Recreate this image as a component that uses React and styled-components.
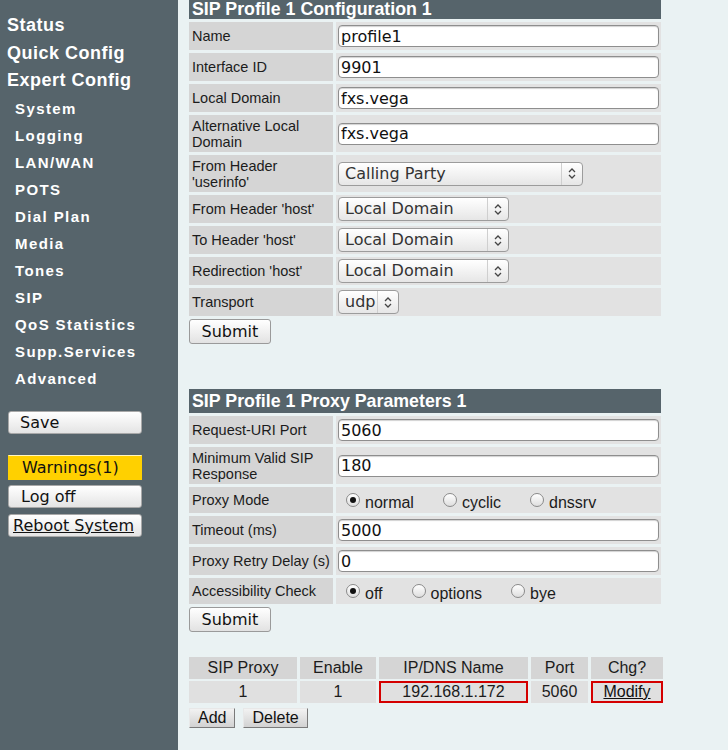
import React from 'react';
import styled, { createGlobalStyle } from 'styled-components';

const GlobalStyle = createGlobalStyle`
    html, body {
        margin: 0;
        padding: 0;
    }
    body {
        background: #eaf2f3;
        font-family: "Liberation Sans", Arial, sans-serif;
    }
`

const Page = styled.div`
    display: flex;
    min-height: 750px;
    overflow: hidden;
`

const Sidebar = styled.nav`
    width: 178px;
    flex-shrink: 0;
    background: #56646b;
    padding-top: 12px;
    box-sizing: border-box;
`

const NavLink = styled.a`
    display: block;
    color: #fff;
    text-decoration: none;
    font-weight: bold;
    white-space: nowrap;
    font-size: ${p => p.$sub ? '15px' : '18px'};
    line-height: ${p => p.$sub ? '27.1px' : '27.5px'};
    letter-spacing: ${p => p.$sub ? '1.4px' : '0.5px'};
    padding-left: ${p => p.$sub ? '15px' : '7px'};
`

const SideButtons = styled.div`
    display: flex;
    flex-direction: column;
    align-items: flex-start;
    padding-left: 8px;
    margin-top: 18px;
`

const SideButton = styled.a`
    display: flex;
    align-items: center;
    width: 134px;
    box-sizing: border-box;
    margin-top: ${p => p.$gap}px;
    padding-left: ${p => p.$indent}px;
    font-family: "DejaVu Sans", sans-serif;
    font-size: 16px;
    color: #111;
    white-space: nowrap;
    text-decoration: ${p => p.$underline ? 'underline' : 'none'};
    background: ${p => p.$warn ? '#ffd000' : 'linear-gradient(#ffffff, #e4e4e4)'};
    border: 1px solid ${p => p.$warn ? '#ffd000' : '#a8a8a8'};
    border-top-color: ${p => p.$warn ? '#fff6c0' : '#a8a8a8'};
    border-radius: ${p => p.$warn ? '0' : '3px'};
    height: ${p => p.$warn ? '25px' : '23px'};
`

const Main = styled.main`
    padding-left: 11px;
    width: 472px;
`

const Form = styled.form`
    display: flex;
    flex-direction: column;
    gap: 3px;
    margin-top: ${p => p.$top || 0}px;
`

const SectionHeader = styled.div`
    height: ${p => p.$first ? 19 : 24}px;
    line-height: ${p => p.$first ? 19 : 24}px;
    background: #56646b;
    color: #fff;
    font-weight: bold;
    font-size: 17.8px;
    padding-left: 3px;
    white-space: nowrap;
    overflow: hidden;
`

const FieldRow = styled.div`
    display: grid;
    grid-template-columns: 144px 325px;
    column-gap: 3px;
    height: ${p => p.$h || 28}px;
`

const Label = styled.div`
    display: flex;
    align-items: center;
    background: #d5d5d5;
    padding: 0 3px;
    font-size: 14.5px;
    line-height: 16px;
    color: #1c1c1c;
    white-space: pre-line;
`

const Value = styled.div`
    display: flex;
    align-items: center;
    background: #e2e2e2;
    padding: 0 2px;
`

const TextInput = styled.input`
    width: 100%;
    height: 22px;
    box-sizing: border-box;
    border: 1px solid #8e8e8e;
    border-radius: 4px;
    padding: 0 2px;
    background: #fff;
    box-shadow: inset 0 1px 1px rgba(0, 0, 0, 0.18);
    font-family: "DejaVu Sans", sans-serif;
    font-size: 16px;
    color: #111;
    outline: none;
`

const SelectBox = styled.div`
    display: flex;
    width: ${p => p.$w}px;
    height: 24px;
    box-sizing: border-box;
    border: 1px solid #9c9c9c;
    border-radius: 4px;
    background: linear-gradient(#ffffff, #e6e6e6);
    font-family: "DejaVu Sans", sans-serif;
    font-size: 16px;
    color: #333;
`

const SelectValue = styled.span`
    flex: 1;
    padding-left: 6px;
    line-height: 22px;
    white-space: nowrap;
`

const SelectArrow = styled.span`
    display: flex;
    align-items: center;
    justify-content: center;
    width: 20px;
    border-left: 1px solid #cfcfcf;
`

const RadioGroup = styled.div`
    display: flex;
    align-items: center;
    padding-left: 8px;
`

const RadioOption = styled.label`
    display: flex;
    align-items: center;
    margin-right: 29px;
    font-size: 16px;
    color: #1c1c1c;
`

const RadioCircle = styled.span`
    display: flex;
    align-items: center;
    justify-content: center;
    width: 14px;
    height: 14px;
    box-sizing: border-box;
    border: 1px solid #8a8a8a;
    border-radius: 50%;
    background: linear-gradient(#ffffff, #dedede);
    margin-right: 5px;

    &::after {
        content: '';
        width: 6px;
        height: 6px;
        border-radius: 50%;
        background: ${p => p.$checked ? '#111' : 'transparent'};
    }
`

const RadioText = styled.span`
    padding-top: 5px;
`

const SubmitButton = styled.button`
    align-self: flex-start;
    height: 25px;
    padding: 0 11.5px;
    border: 1px solid #9a9a9a;
    border-radius: 3px;
    background: linear-gradient(#ffffff, #e2e2e2);
    font-family: "DejaVu Sans", sans-serif;
    font-size: 16px;
    color: #111;
`

const ProxyTable = styled.div`
    display: grid;
    grid-template-columns: 108px 76px 149px 57px 72px;
    column-gap: 3px;
    row-gap: 2px;
    margin-top: 25px;
`

const Cell = styled.div`
    height: 22px;
    box-sizing: border-box;
    display: flex;
    align-items: center;
    justify-content: center;
    font-size: 16px;
    color: #1c1c1c;
    background: ${p => p.$head ? '#d5d5d5' : '#e0e0e0'};
    border: ${p => p.$marked ? '2px solid #d40000' : 'none'};
`

const ModifyLink = styled.a`
    color: #111;
    text-decoration: underline;
`

const TableActions = styled.div`
    display: flex;
    gap: 8px;
    margin-top: 5px;
`

const FlatButton = styled.button`
    height: 20px;
    padding: 0 8px;
    font-family: "Liberation Sans", Arial, sans-serif;
    font-size: 16px;
    color: #111;
    background: linear-gradient(#f2f2f2, #d2d2d2);
    border: 1px solid;
    border-color: #e8e8e8 #7a7a7a #7a7a7a #e8e8e8;
    border-radius: 0;
`

const mainNav = ['Status', 'Quick Config', 'Expert Config'];
const subNav = ['System', 'Logging', 'LAN/WAN', 'POTS', 'Dial Plan', 'Media', 'Tones', 'SIP', 'QoS Statistics', 'Supp.Services', 'Advanced'];

const Chevrons = () => (
    <svg width="8" height="13" viewBox="0 0 8 13">
        <path d="M1 5 L4 2 L7 5" fill="none" stroke="#444" strokeWidth="1.3" />
        <path d="M1 8 L4 11 L7 8" fill="none" stroke="#444" strokeWidth="1.3" />
    </svg>
)

const Select = ({ value, width }) => (
    <SelectBox $w={width}>
        <SelectValue>{value}</SelectValue>
        <SelectArrow><Chevrons /></SelectArrow>
    </SelectBox>
)

const Radios = ({ options, checked }) => (
    <RadioGroup>
        {options.map(opt => (
            <RadioOption key={opt}>
                <RadioCircle $checked={opt === checked} />
                <RadioText>{opt}</RadioText>
            </RadioOption>
        ))}
    </RadioGroup>
)

const Field = ({ label, height, children }) => (
    <FieldRow $h={height}>
        <Label>{label}</Label>
        <Value>{children}</Value>
    </FieldRow>
)

export default function App() {
    return (
        <Page>
            <GlobalStyle />
            <Sidebar>
                {mainNav.map(item => <NavLink key={item}>{item}</NavLink>)}
                {subNav.map(item => <NavLink $sub key={item}>{item}</NavLink>)}
                <SideButtons>
                    <SideButton $gap={0} $indent={11}>Save</SideButton>
                    <SideButton $gap={21} $indent={13} $warn>Warnings(1)</SideButton>
                    <SideButton $gap={5} $indent={12}>Log off</SideButton>
                    <SideButton $gap={6} $indent={4} $underline>Reboot System</SideButton>
                </SideButtons>
            </Sidebar>

            <Main>
                <Form onSubmit={e => e.preventDefault()}>
                    <SectionHeader $first>SIP Profile 1 Configuration 1</SectionHeader>
                    <Field label="Name"><TextInput defaultValue="profile1" /></Field>
                    <Field label="Interface ID"><TextInput defaultValue="9901" /></Field>
                    <Field label="Local Domain"><TextInput defaultValue="fxs.vega" /></Field>
                    <Field label={'Alternative Local\nDomain'} height={37}><TextInput defaultValue="fxs.vega" /></Field>
                    <Field label={'From Header\n\'userinfo\''} height={37}><Select value="Calling Party" width={245} /></Field>
                    <Field label="From Header 'host'"><Select value="Local Domain" width={171} /></Field>
                    <Field label="To Header 'host'"><Select value="Local Domain" width={171} /></Field>
                    <Field label="Redirection 'host'"><Select value="Local Domain" width={171} /></Field>
                    <Field label="Transport"><Select value="udp" width={61} /></Field>
                    <SubmitButton type="submit">Submit</SubmitButton>
                </Form>

                <Form $top={45} onSubmit={e => e.preventDefault()}>
                    <SectionHeader>SIP Profile 1 Proxy Parameters 1</SectionHeader>
                    <Field label="Request-URI Port"><TextInput defaultValue="5060" /></Field>
                    <Field label={'Minimum Valid SIP\nResponse'} height={37}><TextInput defaultValue="180" /></Field>
                    <Field label="Proxy Mode" height={26}>
                        <Radios options={['normal', 'cyclic', 'dnssrv']} checked="normal" />
                    </Field>
                    <Field label="Timeout (ms)"><TextInput defaultValue="5000" /></Field>
                    <Field label="Proxy Retry Delay (s)"><TextInput defaultValue="0" /></Field>
                    <Field label="Accessibility Check" height={26}>
                        <Radios options={['off', 'options', 'bye']} checked="off" />
                    </Field>
                    <SubmitButton type="submit">Submit</SubmitButton>
                </Form>

                <ProxyTable>
                    <Cell $head>SIP Proxy</Cell>
                    <Cell $head>Enable</Cell>
                    <Cell $head>IP/DNS Name</Cell>
                    <Cell $head>Port</Cell>
                    <Cell $head>Chg?</Cell>
                    <Cell>1</Cell>
                    <Cell>1</Cell>
                    <Cell $marked>192.168.1.172</Cell>
                    <Cell>5060</Cell>
                    <Cell $marked><ModifyLink>Modify</ModifyLink></Cell>
                </ProxyTable>
                <TableActions>
                    <FlatButton>Add</FlatButton>
                    <FlatButton>Delete</FlatButton>
                </TableActions>
            </Main>
        </Page>
    )
}
